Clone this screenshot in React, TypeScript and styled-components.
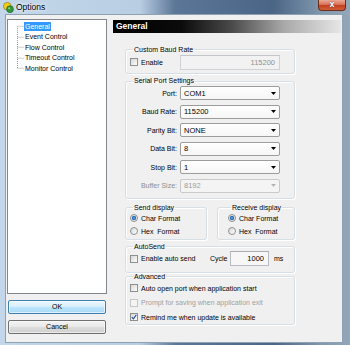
import React from 'react';
import styled, {createGlobalStyle} from 'styled-components';

const GlobalStyle = createGlobalStyle`
  html, body {
    margin: 0;
    padding: 0;
    background: #ffffff;
  }
  body {
    font-family: "Liberation Sans", Arial, sans-serif;
    font-size: 7px;
    color: #000;
  }
`;

const treeItems = ['General', 'Event Control', 'Flow Control', 'Timeout Control', 'Monitor Control'];

const serialRows = [
  {label: 'Port:', value: 'COM1'},
  {label: 'Baud Rate:', value: '115200'},
  {label: 'Parity Bit:', value: 'NONE'},
  {label: 'Data Bit:', value: '8'},
  {label: 'Stop Bit:', value: '1'},
  {label: 'Buffer Size:', value: '8192', disabled: true},
];

function AppIcon() {
  return (
    <svg width="11" height="11" viewBox="0 0 11 11">
      <circle cx="4.2" cy="4.2" r="3.8" fill="#f2cc1a" stroke="#8a7410" strokeWidth="0.6" />
      <circle cx="7" cy="7.2" r="3.4" fill="#2f9a3a" stroke="#1c4f22" strokeWidth="0.6" />
      <circle cx="6.2" cy="6.3" r="1" fill="#8fd88f" />
    </svg>
  );
}

function Connector({first, last}: {first: boolean; last: boolean}) {
  return (
    <svg width="8" height="10.5" viewBox="0 0 8 10.5">
      <line x1="1.5" y1={first ? 5.25 : 0} x2="1.5" y2={last ? 5.25 : 10.5} stroke="#a0a0a0" strokeDasharray="1 1" />
      <line x1="1.5" y1="5.25" x2="8" y2="5.25" stroke="#a0a0a0" strokeDasharray="1 1" />
    </svg>
  );
}

function Check({checked, disabled}: {checked?: boolean; disabled?: boolean}) {
  return (
    <CheckBox $disabled={disabled}>
      {checked ? (
        <svg width="6" height="6" viewBox="0 0 6 6">
          <path d="M0.8 3.2 L2.4 4.9 L5.3 0.9" fill="none" stroke="#2a4f9e" strokeWidth="1.1" />
        </svg>
      ) : null}
    </CheckBox>
  );
}

function DropArrow({disabled}: {disabled?: boolean}) {
  return (
    <svg width="5" height="3" viewBox="0 0 5 3">
      <path d="M0 0 H5 L2.5 3 Z" fill={disabled ? '#b4b4b4' : '#000'} />
    </svg>
  );
}

function App() {
  return (
    <>
      <GlobalStyle />
      <Window>
        <TitleBar>
          <AppIcon />
          <TitleText>Options</TitleText>
          <CloseButton>x</CloseButton>
        </TitleBar>

        <Client>
          <LeftCol>
            <TreeBox>
              {treeItems.map((item, i) => (
                <TreeRow key={item}>
                  <Connector first={i === 0} last={i === treeItems.length - 1} />
                  <TreeLabel $selected={i === 0}>{item}</TreeLabel>
                </TreeRow>
              ))}
            </TreeBox>
            <DialogButton $default>OK</DialogButton>
            <DialogButton>Cancel</DialogButton>
          </LeftCol>

          <RightCol>
            <Header>General</Header>
            <Groups>
              <Group $mt={12.5} $pb={3}>
                <Legend>Custom Baud Rate</Legend>
                <FormGrid>
                  <CheckRow>
                    <Check />
                    <span>Enable</span>
                  </CheckRow>
                  <TextField $disabled>115200</TextField>
                </FormGrid>
              </Group>

              <Group $mt={3.5} $pb={5}>
                <Legend>Serial Port Settings</Legend>
                <FormGrid $gap={4.6}>
                  {serialRows.map((row) => (
                    <React.Fragment key={row.label}>
                      <FieldLabel $disabled={row.disabled}>{row.label}</FieldLabel>
                      <Select $disabled={row.disabled}>
                        <span>{row.value}</span>
                        <DropArrow disabled={row.disabled} />
                      </Select>
                    </React.Fragment>
                  ))}
                </FormGrid>
              </Group>

              <GroupRow>
                <Group $w={82} $pb={1}>
                  <Legend>Send display</Legend>
                  <RadioRow><Radio $on />Char Format</RadioRow>
                  <RadioRow><Radio />Hex&nbsp; Format</RadioRow>
                </Group>
                <Group $w={78} $pl={10} $pb={1}>
                  <Legend>Receive display</Legend>
                  <RadioRow><Radio $on />Char Format</RadioRow>
                  <RadioRow><Radio />Hex&nbsp; Format</RadioRow>
                </Group>
              </GroupRow>

              <Group $mt={3} $pb={5}>
                <Legend>AutoSend</Legend>
                <AutoRow>
                  <CheckRow $w={80}>
                    <Check />
                    <span>Enable auto send</span>
                  </CheckRow>
                  <CycleLabel>Cycle</CycleLabel>
                  <TextField $w={39}>1000</TextField>
                  <Unit>ms</Unit>
                </AutoRow>
              </Group>

              <Group $mt={0} $pb={0}>
                <Legend>Advanced</Legend>
                <CheckRow $h={14.5}>
                  <Check />
                  <span>Auto open port when application start</span>
                </CheckRow>
                <CheckRow $h={14.5} $disabled>
                  <Check disabled />
                  <span>Prompt for saving when application exit</span>
                </CheckRow>
                <CheckRow $h={14.5}>
                  <Check checked />
                  <span>Remind me when update is available</span>
                </CheckRow>
              </Group>
            </Groups>
          </RightCol>
        </Client>
      </Window>
    </>
  );
}

export default App;

const Window = styled.div`
  width: 350px;
  height: 345px;
  display: flex;
  flex-direction: column;
  overflow: hidden;
  background: linear-gradient(to right, #c4d7ea 0%, #b9cee3 40%, #5b7696 50%, #4a6585 78%, #8299ae 92%, #93a7b8 100%);
`;

const TitleBar = styled.div`
  height: 14px;
  flex: none;
  display: flex;
  align-items: flex-start;
  padding: 2px 0 0 3px;
  box-sizing: border-box;
`;

const TitleText = styled.span`
  margin-left: 2px;
  font-size: 8.5px;
  line-height: 10px;
  color: #000;
  text-shadow: 0 0 3px rgba(255, 255, 255, 0.9), 0 0 5px rgba(255, 255, 255, 0.7);
`;

const CloseButton = styled.div`
  margin: -2px 4px 0 auto;
  width: 28px;
  height: 11px;
  box-sizing: border-box;
  border: 1px solid #6e2c1c;
  border-top: none;
  border-radius: 0 0 4px 4px;
  background: linear-gradient(#e9a995 0%, #d9735a 45%, #c2401f 55%, #d2603a 100%);
  color: #fff;
  font-family: "Liberation Sans", Arial, sans-serif;
  font-weight: bold;
  font-size: 9px;
  line-height: 9px;
  text-align: center;
  text-shadow: 0 0 2px #6e2c1c;
`;

const Client = styled.div`
  flex: 1;
  display: flex;
  margin: 0 7px 2px 5px;
  background: #f0f0f0;
  border: 1px solid #8fa2b4;
  min-height: 0;
`;

const LeftCol = styled.div`
  width: 100px;
  flex: none;
  display: flex;
  flex-direction: column;
  padding: 4px 0 0 0;
  margin-left: 1px;
`;

const TreeBox = styled.div`
  height: 275px;
  box-sizing: border-box;
  background: #fff;
  border: 1px solid #828790;
  padding: 1px 0 0 8px;
  margin-bottom: 6px;
`;

const TreeRow = styled.div`
  height: 10.5px;
  display: flex;
  align-items: center;
`;

const TreeLabel = styled.span<{$selected?: boolean}>`
  padding: 0 1px;
  line-height: 9px;
  background: ${p => (p.$selected ? '#3399ff' : 'transparent')};
  color: ${p => (p.$selected ? '#fff' : '#000')};
`;

const DialogButton = styled.div<{$default?: boolean}>`
  height: 14px;
  margin: 0 1px 6px 1px;
  box-sizing: border-box;
  border: 1px solid ${p => (p.$default ? '#3c7fb1' : '#707070')};
  border-radius: 2px;
  background: ${p =>
    p.$default
      ? 'linear-gradient(#eaf6fd 0%, #d9f0fc 45%, #bee6fd 50%, #a7d9f5 100%)'
      : 'linear-gradient(#f2f2f2 0%, #ebebeb 45%, #dddddd 50%, #cfcfcf 100%)'};
  box-shadow: inset 0 0 0 1px rgba(255, 255, 255, 0.6);
  text-align: center;
  line-height: 12px;
  font-size: 7px;
`;

const RightCol = styled.div`
  flex: 1;
  display: flex;
  flex-direction: column;
  margin-left: 6px;
  padding: 5px 1px 0 0;
`;

const Header = styled.div`
  height: 13px;
  padding-left: 3px;
  background: linear-gradient(to right, #000 0%, #0b0b0b 30%, #4a4a4a 52%, #a9a9a9 75%, #e6e6e6 100%);
  color: #fff;
  font-weight: bold;
  font-size: 8.5px;
  line-height: 13px;
`;

const Groups = styled.div`
  display: flex;
  flex-direction: column;
  padding-left: 12px;
  width: 170px;
`;

const Group = styled.fieldset<{$w?: number; $pl?: number; $pb?: number; $mt?: number}>`
  margin: ${p => p.$mt ?? 0}px 0 0 0;
  padding: 0 4px ${p => p.$pb ?? 2}px ${p => p.$pl ?? 4}px;
  width: ${p => (p.$w ? `${p.$w}px` : 'auto')};
  box-sizing: border-box;
  min-width: 0;
  border: 1px solid #d5dfe5;
  border-radius: 3px;
  box-shadow: inset 1px 1px 0 #ffffff, 1px 1px 0 #ffffff;
`;

const Legend = styled.legend`
  padding: 0 1px;
  margin-left: 3px;
  font-size: 7px;
  line-height: 8px;
  color: #000;
`;

const GroupRow = styled.div`
  display: flex;
  gap: 10px;
  margin-top: 5px;
`;

const FormGrid = styled.div<{$gap?: number}>`
  display: grid;
  grid-template-columns: 47px 100px;
  column-gap: 3px;
  row-gap: ${p => p.$gap ?? 0}px;
  align-items: center;
  padding-top: 1px;
`;

const FieldLabel = styled.span<{$disabled?: boolean}>`
  text-align: right;
  color: ${p => (p.$disabled ? '#8d8d8d' : '#000')};
`;

const Select = styled.div<{$disabled?: boolean}>`
  height: 14px;
  box-sizing: border-box;
  display: flex;
  align-items: center;
  justify-content: space-between;
  padding: 0 3px 0 3px;
  border: 1px solid ${p => (p.$disabled ? '#c9c9c9' : '#9c9c9c')};
  border-radius: 2px;
  background: ${p => (p.$disabled ? '#f4f4f4' : 'linear-gradient(#ffffff, #f6f6f6)')};
  color: ${p => (p.$disabled ? '#9a9a9a' : '#000')};
  font-size: 7.5px;
`;

const TextField = styled.div<{$disabled?: boolean; $w?: number}>`
  width: ${p => (p.$w ? `${p.$w}px` : 'auto')};
  height: 15px;
  box-sizing: border-box;
  padding: 0 4px;
  border: 1px solid ${p => (p.$disabled ? '#cfd2d6' : '#b8bcc2')};
  border-top-color: ${p => (p.$disabled ? '#c3c6ca' : '#abadb3')};
  background: ${p => (p.$disabled ? '#f2f2f2' : '#f7f7f7')};
  color: ${p => (p.$disabled ? '#8f8f8f' : '#000')};
  text-align: right;
  line-height: 13px;
  font-size: 7.5px;
`;

const CheckRow = styled.div<{$w?: number; $h?: number; $disabled?: boolean}>`
  display: flex;
  align-items: center;
  gap: 3px;
  height: ${p => (p.$h ? `${p.$h}px` : 'auto')};
  width: ${p => (p.$w ? `${p.$w}px` : 'auto')};
  flex: none;
  color: ${p => (p.$disabled ? '#a0a0a0' : '#000')};
  white-space: nowrap;
`;

const CheckBox = styled.span<{$disabled?: boolean}>`
  width: 8px;
  height: 8px;
  box-sizing: border-box;
  flex: none;
  display: inline-flex;
  align-items: center;
  justify-content: center;
  border: 1px solid ${p => (p.$disabled ? '#c6c6c6' : '#8e8f8f')};
  background: ${p => (p.$disabled ? '#f4f4f4' : 'linear-gradient(135deg, #d6d6d6 0%, #f2f2f2 70%, #ffffff 100%)')};
`;

const RadioRow = styled.div`
  height: 13px;
  display: flex;
  align-items: center;
  gap: 3px;
  white-space: nowrap;
`;

const Radio = styled.span<{$on?: boolean}>`
  width: 8px;
  height: 8px;
  box-sizing: border-box;
  flex: none;
  border-radius: 50%;
  border: 1px solid #8e8f8f;
  background: ${p =>
    p.$on
      ? 'radial-gradient(circle, #6fb3ee 0%, #1f5fb0 45%, #e4e4e4 55%, #f6f6f6 100%)'
      : 'linear-gradient(135deg, #d6d6d6 0%, #f4f4f4 70%, #ffffff 100%)'};
`;

const AutoRow = styled.div`
  display: flex;
  align-items: center;
  height: 16px;
`;

const CycleLabel = styled.span`
  width: 18px;
  margin-right: 2px;
`;

const Unit = styled.span`
  margin-left: 5px;
`;
